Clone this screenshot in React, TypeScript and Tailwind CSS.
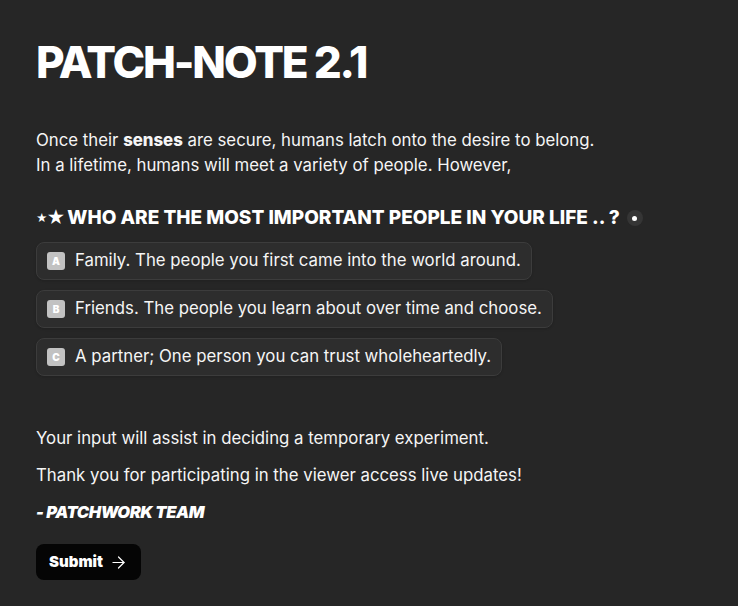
import { ArrowRight } from "lucide-react";

const options = [
  { key: "A", text: "Family. The people you first came into the world around." },
  { key: "B", text: "Friends. The people you learn about over time and choose." },
  { key: "C", text: "A partner; One person you can trust wholeheartedly." },
];

const App = () => {
  return (
    <div className="min-h-screen bg-[#262626] px-9 pt-[38px] font-['Inter',sans-serif] text-white antialiased">
      <h1 className="text-[44px] font-extrabold leading-[48px] tracking-[-0.05em]">PATCH-NOTE 2.1</h1>

      <p className="mt-[42px] text-[16.8px] leading-[25px] text-[#f5f5f5]">
        Once their <strong className="font-extrabold">senses</strong> are secure, humans latch onto the desire to belong.
        <br />
        In a lifetime, humans will meet a variety of people. However,
      </p>

      <h2 className="mt-[28px] flex items-center text-[19px] font-extrabold leading-[24px]">
        <span className="text-[11px] leading-none">★</span>
        <span className="-ml-[1px] text-[18px] leading-none">★</span>
        <span className="ml-[2px]">WHO ARE THE MOST IMPORTANT PEOPLE IN YOUR LIFE .. ?</span>
        <span className="ml-[7px] flex h-4 w-4 items-center justify-center rounded-full bg-[#353535]">
          <span className="h-[5px] w-[5px] rounded-full bg-white" />
        </span>
      </h2>

      <ul className="mt-[12px] flex flex-col items-start gap-[10px]">
        {options.map((option) => (
          <li
            key={option.key}
            className="flex h-[38px] items-center gap-[10px] rounded-lg border border-[#3c3c3c] bg-[#2d2d2d] pl-[10px] pr-[10px] shadow-sm"
          >
            <span className="flex h-[18px] w-[18px] items-center justify-center rounded-[3px] bg-[#c2c2c2] text-[10px] font-black text-white">
              {option.key}
            </span>
            <span className="text-[16.8px] text-[#f5f5f5]">{option.text}</span>
          </li>
        ))}
      </ul>

      <p className="mt-[50px] text-[16.8px] leading-[24px] text-[#f5f5f5]">
        Your input will assist in deciding a temporary experiment.
      </p>
      <p className="mt-[13px] text-[16.8px] leading-[24px] text-[#f5f5f5]">
        Thank you for participating in the viewer access live updates!
      </p>
      <p className="mt-[13px] text-[16.5px] font-black italic leading-[24px] tracking-tight">- PATCHWORK TEAM</p>

      <button
        type="button"
        className="mt-[20px] flex h-9 w-[105px] items-center gap-[6px] rounded-lg bg-[#050505] pl-[13px] text-[15px] font-black"
      >
        Submit
        <ArrowRight size={19} strokeWidth={1.5} />
      </button>
    </div>
  );
};

export default App;
